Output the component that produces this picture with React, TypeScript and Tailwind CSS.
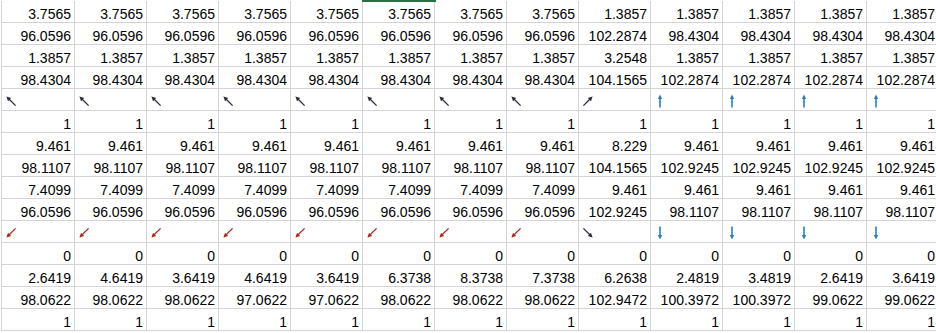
import React from 'react';

type Arrow = 'nw' | 'ne' | 'up' | 'sw' | 'se' | 'down';

const rows: (string | Arrow)[][] = [
  [...Array(8).fill('3.7565'), ...Array(5).fill('1.3857')],
  [...Array(8).fill('96.0596'), '102.2874', ...Array(4).fill('98.4304')],
  [...Array(8).fill('1.3857'), '3.2548', ...Array(4).fill('1.3857')],
  [...Array(8).fill('98.4304'), '104.1565', ...Array(4).fill('102.2874')],
  [...Array(8).fill('nw'), 'ne', ...Array(4).fill('up')],
  Array(13).fill('1'),
  [...Array(8).fill('9.461'), '8.229', ...Array(4).fill('9.461')],
  [...Array(8).fill('98.1107'), '104.1565', ...Array(4).fill('102.9245')],
  [...Array(8).fill('7.4099'), ...Array(5).fill('9.461')],
  [...Array(8).fill('96.0596'), '102.9245', ...Array(4).fill('98.1107')],
  [...Array(8).fill('sw'), 'se', ...Array(4).fill('down')],
  Array(13).fill('0'),
  ['2.6419', '4.6419', '3.6419', '4.6419', '3.6419', '6.3738', '8.3738', '7.3738', '6.2638', '2.4819', '3.4819', '2.6419', '3.6419'],
  ['98.0622', '98.0622', '98.0622', '97.0622', '97.0622', '98.0622', '98.0622', '98.0622', '102.9472', '100.3972', '100.3972', '99.0622', '99.0622'],
  Array(13).fill('1'),
];

const arrowInfo: Record<Arrow, { angle: number; color: string; width: number }> = {
  nw: { angle: -45, color: '#2b2b3a', width: 1.3 },
  ne: { angle: 45, color: '#2b2b3a', width: 1.3 },
  se: { angle: 135, color: '#2b2b3a', width: 1.3 },
  sw: { angle: -135, color: '#b3261e', width: 1.3 },
  up: { angle: 0, color: '#2e7cc9', width: 1.6 },
  down: { angle: 180, color: '#2e7cc9', width: 1.6 },
};

function ArrowIcon({ kind }: { kind: Arrow }) {
  const a = arrowInfo[kind];
  return (
    <svg width="14" height="14" viewBox="0 0 14 14" className="ml-[2px] mt-[5px]">
      <g transform={`rotate(${a.angle} 7 7)`}>
        <line x1="7" y1="13.5" x2="7" y2="3" stroke={a.color} strokeWidth={a.width} />
        <polygon points="4.8,5 7,0.5 9.2,5" fill={a.color} />
      </g>
    </svg>
  );
}

const isArrow = (v: string): v is Arrow => v in arrowInfo;

export default function App() {
  return (
    <div className="w-[936px] h-[333px] overflow-hidden bg-white">
      <div className="ml-px pt-px" style={{ fontFamily: '"Liberation Sans", Arial, sans-serif' }}>
        {rows.map((row, r) => (
          <div key={r} className="flex">
            {row.map((v, c) => (
              <div
                key={c}
                className={`relative h-[22px] shrink-0 border-b border-r border-[#d4d4d4] ${
                  c === 0 ? 'w-[74px] border-l' : 'w-[72px]'
                } ${isArrow(v) ? 'flex items-start justify-start' : 'flex items-end justify-end pb-px pr-[3px] text-[14px] leading-none text-black'}`}
              >
                {r === 0 && c === 5 && (
                  <span className="absolute -left-px -top-px h-[2px] w-[74px] bg-[#217346]" />
                )}
                {isArrow(v) ? <ArrowIcon kind={v} /> : v}
              </div>
            ))}
          </div>
        ))}
      </div>
    </div>
  );
}
